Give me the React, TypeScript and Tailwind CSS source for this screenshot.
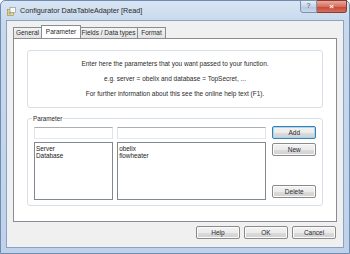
import React from "react";

const font = { fontFamily: '"Liberation Sans", Arial, sans-serif' };

function Btn({ label, focused, className = "" }: { label: string; focused?: boolean; className?: string }) {
  return (
    <div
      className={`flex items-center justify-center rounded-[2px] border text-[6.5px] text-[#2a2a2a] ${
        focused ? "border-[#3c7fb1] shadow-[inset_0_0_0_1px_#a7d8f2]" : "border-[#8a8a8a] shadow-[inset_0_0_0_1px_#fbfbfb]"
      } bg-[linear-gradient(#f3f3f3_0%,#ebebeb_50%,#dddddd_51%,#cfcfcf_100%)] ${className}`}
    >
      {label}
    </div>
  );
}

export default function App() {
  return (
    <div style={font} className="w-[350px] h-[254px] overflow-hidden bg-white">
      <div className="w-[350px] h-[254px] flex flex-col rounded-t-[5px] border border-[#6f8db3] bg-[linear-gradient(#d9e5f3_0px,#c8d9ed_20px,#bfd2e9_100%)]">
        {/* title bar */}
        <div className="h-[18px] flex items-start relative">
          <div className="mt-[6px] ml-[6px] w-[9px] h-[9px]">
            <svg width="9" height="9" viewBox="0 0 9 9">
              <rect x="0.5" y="2.5" width="6" height="6" fill="#f2d67a" stroke="#a08a3a" strokeWidth="0.6" />
              <rect x="3" y="0.5" width="5.5" height="5" fill="#f7f7f7" stroke="#8a8a8a" strokeWidth="0.6" />
              <circle cx="3" cy="6" r="1.4" fill="#8ab0d8" />
            </svg>
          </div>
          <div className="ml-[4px] mt-[4px] text-[7.2px] text-[#2a2a2a] leading-[12px]">Configurator DataTableAdapter [Read]</div>
          <div className="absolute right-[2px] top-[-1px] flex">
            <div className="w-[17px] h-[13px] rounded-bl-[3px] border border-[#7d93ad] bg-[linear-gradient(#e6eef8,#c5d4e6_50%,#b4c6de_51%,#c8d8ec)] flex items-center justify-center text-[7px] text-[#4a5a70]">?</div>
            <div className="w-[30px] h-[13px] rounded-br-[3px] border border-[#8a3a30] border-l-0 bg-[linear-gradient(#e9a99c,#d7705f_50%,#c74531_51%,#d4705c)] flex items-center justify-center text-[8px] font-bold text-white">×</div>
          </div>
        </div>
        {/* client */}
        <div className="flex-1 mx-[5px] mb-[5px] mt-[1px] bg-[#f0f0f0] border border-[#8ba3c3] flex flex-col">
          <div className="pl-[6px] pr-[6px] pt-[4px]">
            {/* tabs */}
            <div className="flex items-end h-[13px] text-[6.5px] text-[#2a2a2a]">
              <div className="h-[11px] w-[29px] flex items-center justify-center border border-[#898c95] border-b-0 bg-[linear-gradient(#f2f2f2,#e3e3e3)]">General</div>
              <div className="h-[13px] w-[40px] -mx-[1px] z-10 flex items-center justify-center border border-[#898c95] border-b-0 bg-white">Parameter</div>
              <div className="h-[11px] w-[58px] flex items-center justify-center border border-[#898c95] border-b-0 border-l-0 bg-[linear-gradient(#f2f2f2,#e3e3e3)]">Fields / Data types</div>
              <div className="h-[11px] w-[28px] flex items-center justify-center border border-[#898c95] border-b-0 border-l-0 bg-[linear-gradient(#f2f2f2,#e3e3e3)]">Format</div>
            </div>
            {/* tab page */}
            <div className="h-[184px] bg-white border border-[#898c95] pt-[11px] px-[13px]">
              <div className="h-[58px] rounded-[3px] border border-[#d5dfe5] flex flex-col items-center justify-center gap-[7px] text-[6.5px] text-[#2a2a2a] leading-[8px]">
                <div>Enter here the parameters that you want passed to your function.</div>
                <div>e.g. server = obelix and database = TopSecret, ...</div>
                <div>For further information about this see the online help text (F1).</div>
              </div>
              <div className="mt-[10px] h-[88px] rounded-[3px] border border-[#d5dfe5] relative px-[6px] pt-[8px] flex gap-[4px]">
                <div className="absolute -top-[5px] left-[4px] bg-white px-[1px] text-[6.3px] leading-[9px] text-[#2a2a2a]">Parameter</div>
                <div className="w-[80px] flex flex-col gap-[3px]">
                  <div className="h-[12px] border border-[#abadb3] border-x-[#e2e3ea] border-b-[#e3e9ef] bg-white" />
                  <div className="h-[58px] border border-[#828790] bg-white px-[1px] pt-[2px] text-[6.4px] leading-[7px] text-[#222]">
                    <div>Server</div>
                    <div>Database</div>
                  </div>
                </div>
                <div className="w-[151px] flex flex-col gap-[3px]">
                  <div className="h-[12px] border border-[#abadb3] border-x-[#e2e3ea] border-b-[#e3e9ef] bg-white" />
                  <div className="h-[58px] border border-[#828790] bg-white px-[1px] pt-[2px] text-[6.4px] leading-[7px] text-[#222]">
                    <div>obelix</div>
                    <div>flowheater</div>
                  </div>
                </div>
                <div className="ml-[2px] w-[44px] flex flex-col -mt-[1px]">
                  <Btn label="Add" focused className="h-[13px]" />
                  <Btn label="New" className="h-[13px] mt-[4px]" />
                  <Btn label="Delete" className="h-[13px] mt-[29px]" />
                </div>
              </div>
            </div>
          </div>
          <div className="flex justify-end gap-[4px] pr-[7px] mt-[4px]">
            <Btn label="Help" className="w-[44px] h-[13px]" />
            <Btn label="OK" className="w-[44px] h-[13px]" />
            <Btn label="Cancel" className="w-[44px] h-[13px]" />
          </div>
        </div>
      </div>
    </div>
  );
}
